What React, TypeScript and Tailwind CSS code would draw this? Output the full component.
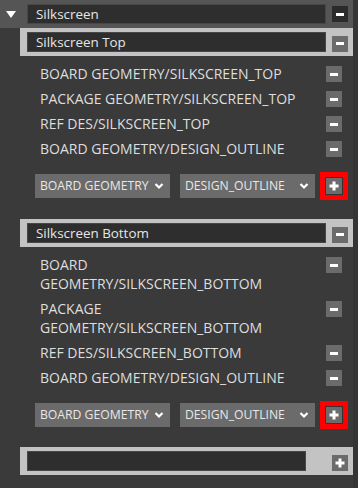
import React from 'react';

const topItems = [
  'BOARD GEOMETRY/SILKSCREEN_TOP',
  'PACKAGE GEOMETRY/SILKSCREEN_TOP',
  'REF DES/SILKSCREEN_TOP',
  'BOARD GEOMETRY/DESIGN_OUTLINE',
];

const bottomItems = [
  'BOARD GEOMETRY/SILKSCREEN_BOTTOM',
  'PACKAGE GEOMETRY/SILKSCREEN_BOTTOM',
  'REF DES/SILKSCREEN_BOTTOM',
  'BOARD GEOMETRY/DESIGN_OUTLINE',
];

function Minus({ dark = false }: { dark?: boolean }) {
  return (
    <div className={`w-4 h-4 shrink-0 flex items-center justify-center ${dark ? 'bg-[#2b2b2b]' : 'bg-[#6b6b6b]'}`}>
      <div className="w-2 h-[3px] bg-white" />
    </div>
  );
}

function Plus() {
  return (
    <div className="w-4 h-4 shrink-0 bg-[#6b6b6b] flex items-center justify-center">
      <svg width="10" height="10" viewBox="0 0 10 10">
        <rect x="3.5" y="0.5" width="3" height="9" fill="#fff" />
        <rect x="0.5" y="3.5" width="9" height="3" fill="#fff" />
      </svg>
    </div>
  );
}

function Chevron() {
  return (
    <svg width="10" height="8" viewBox="0 0 10 8" className="shrink-0">
      <path d="M1.5 2 L5 5.5 L8.5 2" stroke="#fff" strokeWidth="2.2" fill="none" />
    </svg>
  );
}

function GroupHeader({ title, plus = false }: { title: string; plus?: boolean }) {
  return (
    <div className="ml-[20px] h-[28px] bg-[#c3c3c3] flex items-center pl-[7px]">
      <div className={`${plus ? 'w-[279px]' : 'w-[299px]'} h-[20px] bg-[#2e2e2e] border border-[#474747] flex items-center pl-[8px] text-[13.4px] text-[#e6e6e6] leading-[18px]`}>
        {title}
      </div>
      <div className={`${plus ? 'ml-[26px]' : 'ml-[6px]'} mt-[3px]`}>{plus ? <Plus /> : <Minus />}</div>
    </div>
  );
}

function ItemList({ items }: { items: string[] }) {
  return (
    <div className="pl-[40px] pr-[11px] pt-[8px] flex flex-col gap-[6px]">
      {items.map((t, i) => (
        <div key={i} className="flex items-start justify-between">
          <span className="w-[262px] text-[14px] leading-[19px] text-[#dedede]">{t}</span>
          <div className="mt-[2px]">
            <Minus />
          </div>
        </div>
      ))}
    </div>
  );
}

function Select({ label, className }: { label: string; className?: string }) {
  return (
    <div className={`w-[135px] h-6 bg-[#6b6b6b] flex items-center justify-between pl-[5px] pr-[6px] ${className ?? ''}`}>
      <span className="whitespace-nowrap text-[12.2px] text-[#e8e8e8] leading-[16px]">{label}</span>
      <Chevron />
    </div>
  );
}

function SelectRow() {
  return (
    <div className="flex items-center pl-[35px] mt-[14px]">
      <Select label="BOARD GEOMETRY" />
      <Select label="DESIGN_OUTLINE" className="ml-[10px]" />
      <div className="ml-[5px] border-[5px] border-[#ff0000]">
        <div className="border border-[#333]">
          <Plus />
        </div>
      </div>
    </div>
  );
}

export default function App() {
  return (
    <div className="w-[358px] h-[488px] bg-[#3a3a3a] flex font-['Open_Sans',sans-serif] overflow-hidden">
      <div className="w-[353px]">
        <div className="h-[28px] bg-[#555555] flex items-center">
          <div className="w-[27px] flex justify-center pr-[5px]">
            <svg width="10" height="7" viewBox="0 0 10 7">
              <path d="M0 0 H10 L5 7 Z" fill="#fff" />
            </svg>
          </div>
          <div className="w-[299px] h-[20px] bg-[#2e2e2e] border border-[#474747] flex items-center pl-[8px] text-[13.4px] text-[#e6e6e6] leading-[18px]">
            Silkscreen
          </div>
          <div className="ml-[6px]">
            <Minus dark />
          </div>
        </div>

        <GroupHeader title="Silkscreen Top" />
        <ItemList items={topItems} />
        <SelectRow />

        <div className="mt-[19px]">
          <GroupHeader title="Silkscreen Bottom" />
        </div>
        <ItemList items={bottomItems} />
        <SelectRow />

        <div className="mt-[18px]">
          <GroupHeader title="" plus />
        </div>
      </div>
      <div className="flex-1 bg-[#353535]" />
    </div>
  );
}
